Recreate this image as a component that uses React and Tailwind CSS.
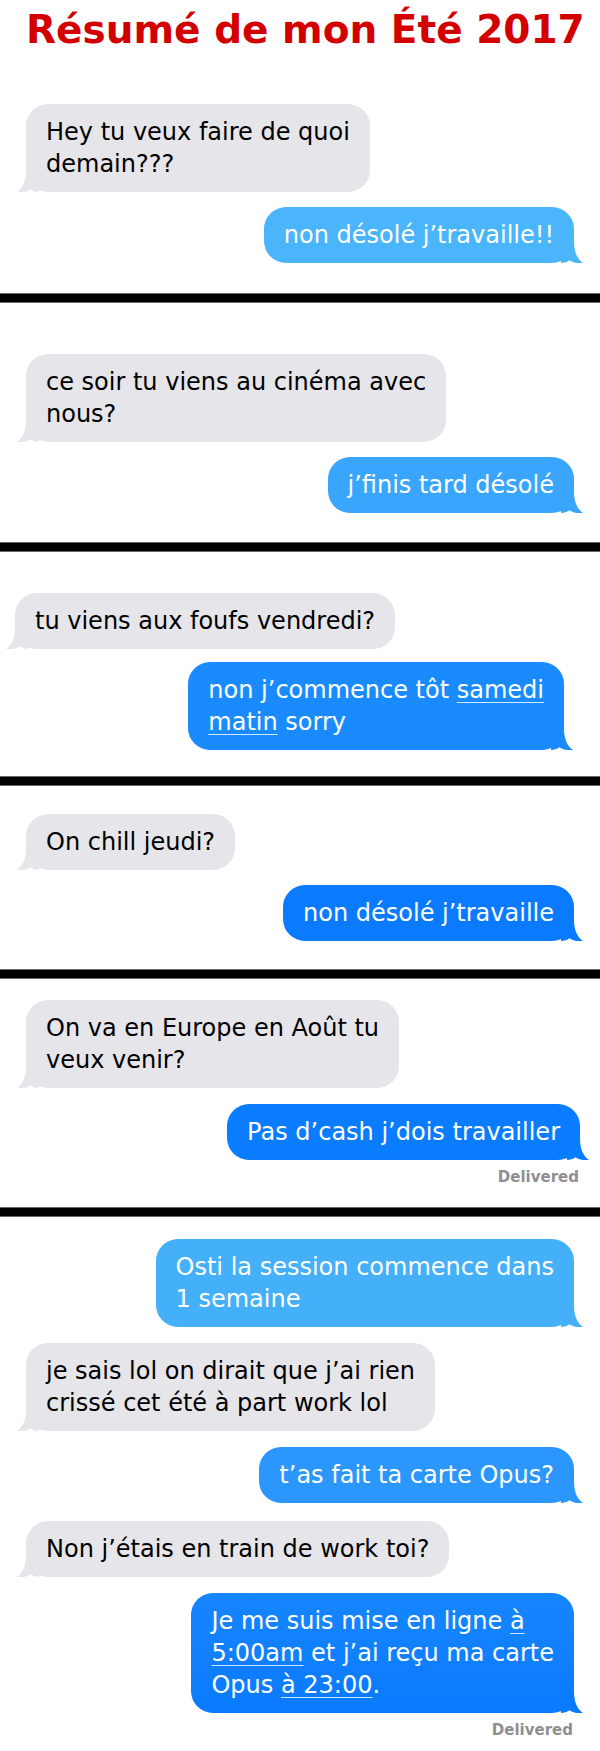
import React from 'react';

const Tail = ({ side, color }) => {
    if (side === 'left') {
        return (
            <svg className="absolute bottom-0 left-[-9px]" width="22" height="22" viewBox="0 0 22 22">
                <path d="M22 0 H9 C9 10 6.5 17.5 0 22 C6 22.6 10.5 21.3 13.5 19.2 C16 21 19 22 22 22 Z" fill={color} />
            </svg>
        );
    }
    return (
        <svg className="absolute bottom-0 right-[-9px]" width="22" height="22" viewBox="0 0 22 22">
            <path d="M0 0 H13 C13 10 15.5 17.5 22 22 C16 22.6 11.5 21.3 8.5 19.2 C6 21 3 22 0 22 Z" fill={color} />
        </svg>
    );
};

function Gray({ children, className = '' }) {
    return (
        <div className={`relative w-fit self-start rounded-[22px] bg-[#e5e5ea] px-5 py-3 text-[24px] leading-8 text-black whitespace-nowrap ${className}`}>
            {children}
            <Tail side="left" color="#e5e5ea" />
        </div>
    );
}

function Blue({ children, bg, tail, className = '' }) {
    return (
        <div className={`relative w-fit self-end rounded-[22px] px-5 py-3 text-[24px] leading-8 text-white whitespace-nowrap ${bg} ${className}`}>
            {children}
            <Tail side="right" color={tail} />
        </div>
    );
}

const Link = ({ children }) => (
    <span className="underline decoration-1 underline-offset-4 decoration-white/80">{children}</span>
);

const Divider = () => <div className="h-[10px] bg-black border-y border-y-[#6b6b6b]" />;

const Delivered = () => (
    <div className="self-end pr-px text-[15px] leading-[18px] font-bold text-[#8e8e93]">Delivered</div>
);

export default function App() {
    return (
        <div className="w-[600px] min-h-[1751px] bg-white font-['DejaVu_Sans',sans-serif]">
            {/* summer recap */}
            <section className="flex flex-col px-[26px] pb-[30px] pt-[7px]">
                <h1 className="text-center text-[39px] leading-[46px] font-bold text-[#d30000] whitespace-nowrap">
                    Résumé de mon Été 2017
                </h1>
                <Gray className="mt-[51px]">
                    Hey tu veux faire de quoi
                    <br />
                    demain???
                </Gray>
                <Blue bg="bg-[#4ab5fb]" tail="#4ab5fb" className="mt-[15px]">
                    non désolé j’travaille!!
                </Blue>
            </section>
            <Divider />

            <section className="flex flex-col px-[26px] pt-[51px] pb-[29px]">
                <Gray>
                    ce soir tu viens au cinéma avec
                    <br />
                    nous?
                </Gray>
                <Blue bg="bg-[#3aa5fd]" tail="#3aa5fd" className="mt-[15px]">
                    j’finis tard désolé
                </Blue>
            </section>
            <Divider />

            <section className="flex flex-col pl-[15px] pr-[36px] pt-[41px] pb-[26px]">
                <Gray>tu viens aux foufs vendredi?</Gray>
                <Blue bg="bg-[#1a8bfe]" tail="#1a8bfe" className="mt-[13px]">
                    non j’commence tôt <Link>samedi</Link>
                    <br />
                    <Link>matin</Link> sorry
                </Blue>
            </section>
            <Divider />

            <section className="flex flex-col px-[26px] pt-[28px] pb-[28px]">
                <Gray>On chill jeudi?</Gray>
                <Blue bg="bg-[#0a7bff]" tail="#0a7bff" className="mt-[15px]">
                    non désolé j’travaille
                </Blue>
            </section>
            <Divider />

            <section className="flex flex-col pl-[26px] pr-[20px] pt-[21px] pb-[21px]">
                <Gray>
                    On va en Europe en Août tu
                    <br />
                    veux venir?
                </Gray>
                <Blue bg="bg-[#0a7cff]" tail="#0a7cff" className="mt-[16px]">
                    Pas d’cash j’dois travailler
                </Blue>
                <div className="mt-[8px] flex flex-col">
                    <Delivered />
                </div>
            </section>
            <Divider />

            <section className="flex flex-col px-[26px] pt-[22px] pb-[12px]">
                <Blue bg="bg-[#45b0fa]" tail="#45b0fa">
                    Osti la session commence dans
                    <br />
                    1 semaine
                </Blue>
                <Gray className="mt-[16px]">
                    je sais lol on dirait que j’ai rien
                    <br />
                    crissé cet été à part work lol
                </Gray>
                <Blue bg="bg-[#2b97fd]" tail="#2b97fd" className="mt-[16px]">
                    t’as fait ta carte Opus?
                </Blue>
                <Gray className="mt-[18px]">Non j’étais en train de work toi?</Gray>
                <Blue bg="bg-gradient-to-b from-[#1686fe] to-[#0a7aff]" tail="#0a7aff" className="mt-[16px]">
                    Je me suis mise en ligne <Link>à</Link>
                    <br />
                    <Link>5:00am</Link> et j’ai reçu ma carte
                    <br />
                    Opus <Link>à 23:00</Link>.
                </Blue>
                <div className="mt-[8px] flex flex-col">
                    <Delivered />
                </div>
            </section>
        </div>
    );
}
